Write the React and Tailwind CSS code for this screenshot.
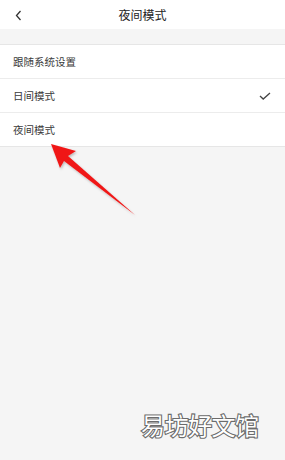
import React from "react";

export default function App() {
  const font = { fontFamily: '"Noto Sans CJK SC", "Noto Sans", sans-serif' };
  return (
    <div className="relative w-[285px] h-[460px] bg-[#f5f5f5] overflow-hidden" style={font}>
      <div className="relative h-[29px] bg-white flex items-center justify-center">
        <svg className="absolute left-[15px] top-[10px]" width="7" height="11" viewBox="0 0 7 11">
          <path d="M5.5 1 L1.5 5.5 L5.5 10" fill="none" stroke="#333" strokeWidth="1.3" />
        </svg>
        <span className="text-[12px] text-[#222] leading-none">夜间模式</span>
      </div>
      <div className="h-[15px]" />
      <div className="bg-white border-t border-[#e6e6e6]">
        <div className="h-[34px] flex items-center px-[13px] border-b border-[#ececec]">
          <span className="text-[10.5px] text-[#3a3a3a] pt-[1px]">跟随系统设置</span>
        </div>
        <div className="h-[34px] flex items-center justify-between px-[13px] border-b border-[#ececec]">
          <span className="text-[10.5px] text-[#3a3a3a] pt-[1px]">日间模式</span>
          <svg width="12" height="8" viewBox="0 0 12 8" className="mr-[1px]">
            <path d="M1 4 L4.2 7 L11 1" fill="none" stroke="#444" strokeWidth="1.3" />
          </svg>
        </div>
        <div className="h-[34px] flex items-center px-[13px] border-b border-[#e6e6e6]">
          <span className="text-[10.5px] text-[#3a3a3a] pt-[1px]">夜间模式</span>
        </div>
      </div>
      <svg className="absolute left-0 top-0 pointer-events-none" width="285" height="460" viewBox="0 0 285 460">
        <defs>
          <filter id="sh" x="-20%" y="-20%" width="140%" height="140%">
            <feDropShadow dx="1" dy="1.5" stdDeviation="1.2" floodColor="#000" floodOpacity="0.25" />
          </filter>
        </defs>
        <path
          d="M51 144 L76 151 L68 156 L135 215 L64 161 L60 168 Z"
          fill="#f01818"
          filter="url(#sh)"
        />
      </svg>
      <div
        className="absolute left-[141px] top-[413px] text-[24px] leading-none tracking-[-0.5px] text-white"
        style={{
          WebkitTextStroke: "2.2px #6f6f6f",
          paintOrder: "stroke fill",
          textShadow: "0 0 1px rgba(0,0,0,0.3)",
          fontFamily: '"Noto Sans CJK SC", sans-serif',
        }}
      >
        易坊好文馆
      </div>
    </div>
  );
}
